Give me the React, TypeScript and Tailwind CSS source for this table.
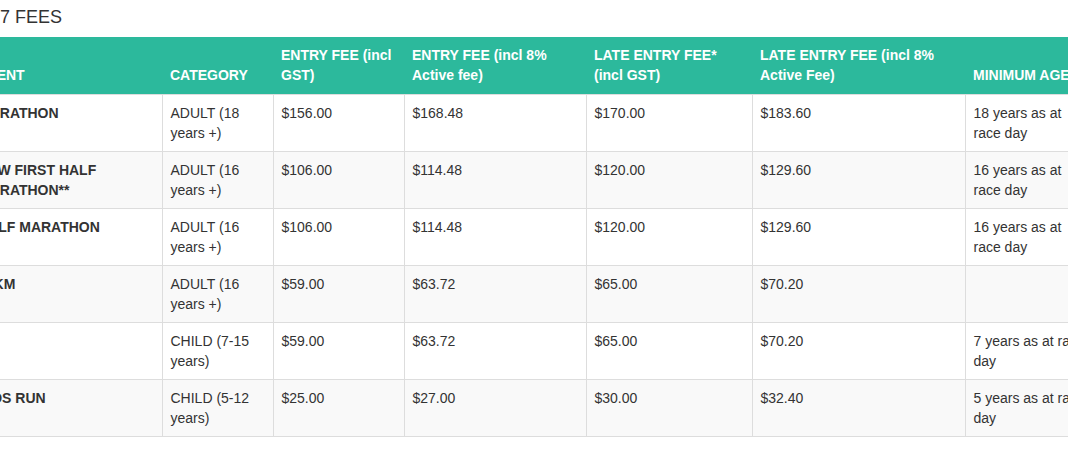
const rows = [
  { event: "MARATHON", category: "ADULT (18 years +)", fee: "$156.00", feeActive: "$168.48", late: "$170.00", lateActive: "$183.60", age: "18 years as at race day" },
  { event: "NEW FIRST HALF MARATHON**", category: "ADULT (16 years +)", fee: "$106.00", feeActive: "$114.48", late: "$120.00", lateActive: "$129.60", age: "16 years as at race day" },
  { event: "HALF MARATHON", category: "ADULT (16 years +)", fee: "$106.00", feeActive: "$114.48", late: "$120.00", lateActive: "$129.60", age: "16 years as at race day" },
  { event: "10KM", category: "ADULT (16 years +)", fee: "$59.00", feeActive: "$63.72", late: "$65.00", lateActive: "$70.20", age: "" },
  { event: "", category: "CHILD (7-15 years)", fee: "$59.00", feeActive: "$63.72", late: "$65.00", lateActive: "$70.20", age: "7 years as at race day" },
  { event: "KIDS RUN", category: "CHILD (5-12 years)", fee: "$25.00", feeActive: "$27.00", late: "$30.00", lateActive: "$32.40", age: "5 years as at race day" },
];

const headers = [
  "EVENT",
  "CATEGORY",
  "ENTRY FEE (incl GST)",
  "ENTRY FEE (incl 8% Active fee)",
  "LATE ENTRY FEE* (incl GST)",
  "LATE ENTRY FEE (incl 8% Active Fee)",
  "MINIMUM AGE",
];

export default function App() {
  return (
    <div className="w-[1068px] h-[449px] overflow-hidden bg-white text-[#333] font-['Liberation_Sans',Arial,sans-serif]">
      <div className="-ml-[30px] w-[1200px]">
        <h2 className="pt-[5px] mb-[8px] text-[18px] leading-[24px] font-normal">2017 FEES</h2>
        <table className="table-fixed border-collapse w-[1193px]">
          <colgroup>
            <col className="w-[192px]" />
            <col className="w-[111px]" />
            <col className="w-[131px]" />
            <col className="w-[182px]" />
            <col className="w-[166px]" />
            <col className="w-[213px]" />
            <col className="w-[198px]" />
          </colgroup>
          <thead>
            <tr className="bg-[#2cb99c]">
              {headers.map((h) => (
                <th
                  key={h}
                  className="h-[57px] px-2 pt-2 pb-[9px] align-bottom text-left text-white text-[14px] leading-[20px] font-bold"
                >
                  {h}
                </th>
              ))}
            </tr>
          </thead>
          <tbody>
            {rows.map((r, i) => (
              <tr key={i} className={i % 2 === 1 ? "bg-[#f9f9f9]" : "bg-white"}>
                <td className="h-[57px] p-2 align-top border border-[#ddd] border-l-0 text-[14px] leading-[20px] font-bold">{r.event}</td>
                <td className="p-2 align-top border border-[#ddd] text-[14px] leading-[20px]">{r.category}</td>
                <td className="p-2 align-top border border-[#ddd] text-[14px] leading-[20px]">{r.fee}</td>
                <td className="p-2 align-top border border-[#ddd] text-[14px] leading-[20px]">{r.feeActive}</td>
                <td className="p-2 align-top border border-[#ddd] text-[14px] leading-[20px]">{r.late}</td>
                <td className="p-2 align-top border border-[#ddd] text-[14px] leading-[20px]">{r.lateActive}</td>
                <td className="p-2 align-top border border-[#ddd] border-r-0 text-[14px] leading-[20px]">
                  <div className="w-[115px]">{r.age}</div>
                </td>
              </tr>
            ))}
          </tbody>
        </table>
      </div>
    </div>
  );
}
